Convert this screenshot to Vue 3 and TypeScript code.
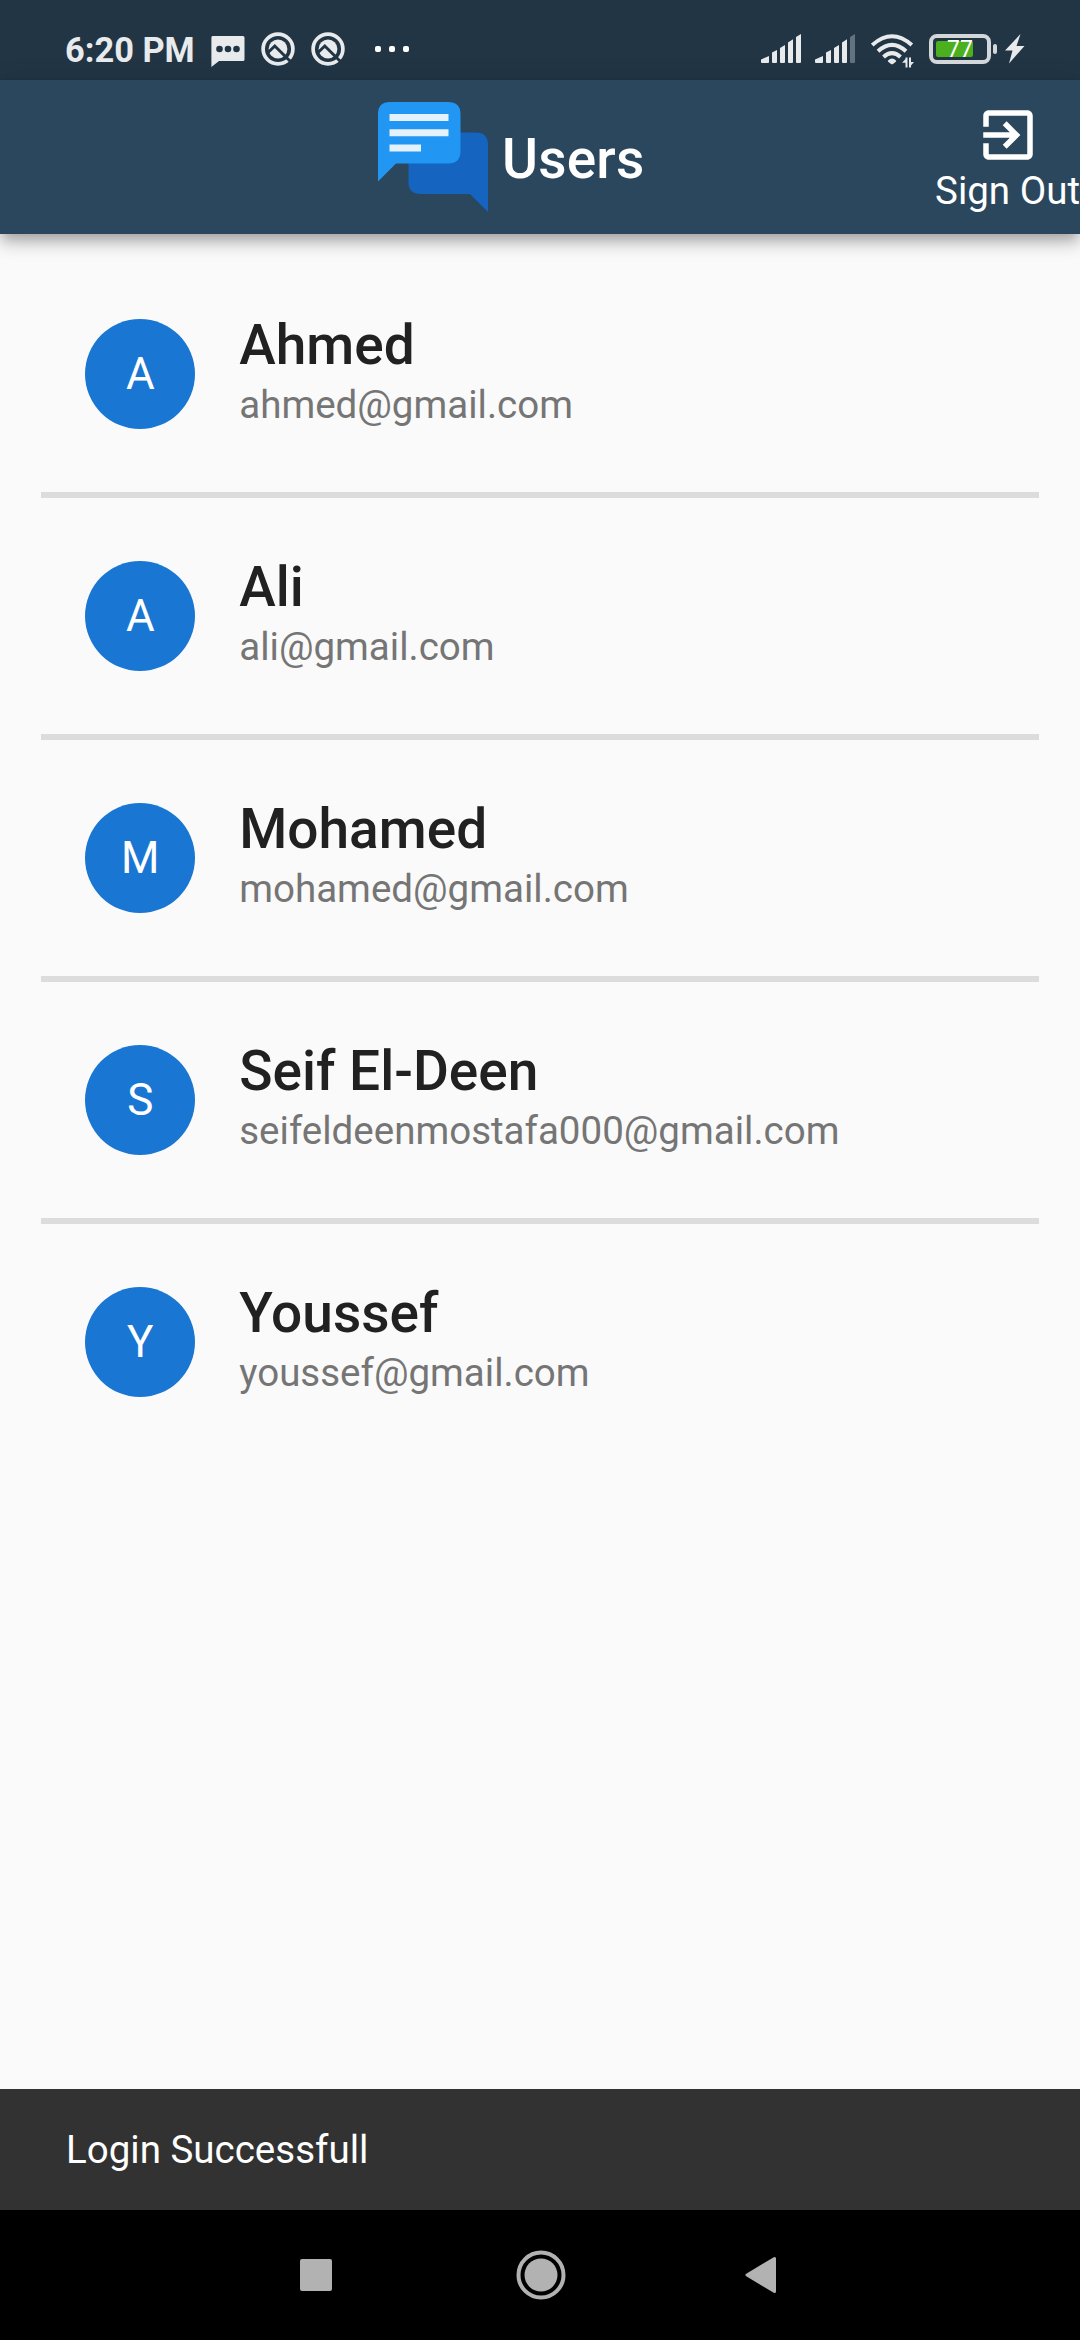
<script setup lang="ts">
interface User {
  name: string
  email: string
}

const users: User[] = [
  { name: 'Ahmed', email: 'ahmed@gmail.com' },
  { name: 'Ali', email: 'ali@gmail.com' },
  { name: 'Mohamed', email: 'mohamed@gmail.com' },
  { name: 'Seif El-Deen', email: 'seifeldeenmostafa000@gmail.com' },
  { name: 'Youssef', email: 'youssef@gmail.com' },
]

// Signal strength bars, from weakest to strongest
const bars: string[] = [
  'M0 25.5L8 22V28.2Q8 29 7 29H1Q0 29 0 28Z',
  'M11 18.5L16 16V28Q16 29 15 29H12Q11 29 11 28Z',
  'M19 14L24 11V28Q24 29 23 29H20Q19 29 19 28Z',
  'M27 8.5L32 5.3V28Q32 29 31 29H28Q27 29 27 28Z',
  'M35 3L40 0V28Q40 29 39 29H36Q35 29 35 28Z',
]
const signals: number[] = [5, 4]
</script>

<template>
  <div class="screen">
    <div class="status">
      <span class="time">6:20 PM</span>
      <svg class="chat" width="34" height="32" viewBox="0 0 34 32">
        <path fill="#e8eaec" d="M1.500 0H32Q33.500 0 33.500 1.500V23.500Q33.500 25 32 25H8L0.400 31V1.500Q0.400 0 1.500 0Z" />
        <g fill="#213545"><circle cx="8.500" cy="13" r="3.300" /><circle cx="17" cy="13" r="3.300" /><circle cx="25.500" cy="13" r="3.300" /></g>
      </svg>
      <svg v-for="n in 2" :key="n" class="q" width="34" height="34" viewBox="0 0 34 34">
        <circle cx="17" cy="17" r="14.900" fill="none" stroke="#e8eaec" stroke-width="3.700" />
        <circle cx="17" cy="17" r="9.400" fill="#e8eaec" />
        <path fill="none" stroke="#213545" stroke-width="3" d="M6.500 21L13.800 14L31 31" />
      </svg>
      <svg class="dots" width="34" height="6" viewBox="0 0 34 6" fill="#fff">
        <rect width="6" height="6" rx="2" /><rect x="14" width="6" height="6" rx="2" /><rect x="28" width="6" height="6" rx="2" />
      </svg>
      <svg v-for="level in signals" :key="level" class="signal" width="40" height="29" viewBox="0 0 40 29">
        <path v-for="(d, i) in bars" :key="i" :d="d" :fill="i < level ? '#e8eaec' : '#647280'" />
      </svg>
      <svg class="wifi" width="43" height="34" viewBox="0 0 43 34">
        <g fill="none" stroke="#e8eaec" stroke-width="4">
          <path d="M1.200 11Q21 -6.500 40.800 11" />
          <path d="M7 17.200Q21 4.500 35 17.200" />
          <path d="M12.500 23Q21 15.300 29.500 23" />
        </g>
        <path fill="#e8eaec" d="M17 26.500Q21 22.500 25 26.500Q25.500 27 24.800 27.700L22 30Q21 30.600 20 30L17.200 27.700Q16.500 27 17 26.500Z" />
        <path fill="#213545" d="M30 23.500H43V34H30Z" />
        <path fill="#e8eaec" d="M34.500 23.500H36.500V33.500H34.500V28.800H31L34.500 25ZM38 23.500H40V28H43L40 31.500V33.500H38Z" />
      </svg>
      <div class="battery"><div class="charge"></div><span class="pct">77</span></div>
      <div class="cap"></div>
      <svg class="bolt" width="20" height="30" viewBox="0 0 20 30"><path fill="#e8eaec" d="M15.500 0L0 16.500H7.500L4 29.500L19.500 12H11.500Z" /></svg>
    </div>

    <header class="appbar">
      <svg class="logo" width="110" height="110" viewBox="0 0 110 110">
        <path fill="#1565c0" d="M42 30.500H98Q110 30.500 110 43V110L92 92H43Q30.500 92 30.500 80V42Q30.500 30.500 42 30.500Z" />
        <path fill="#2196f3" d="M12 0H70Q82.500 0 82.500 12V49Q82.500 61.500 70 61.500H18L0 79.500V12Q0 0 12 0Z" />
        <path fill="#e3f2fd" d="M11.500 12H70.500V19H11.500ZM11.500 27.300H70.500V34.300H11.500ZM11.500 42.500H43V49.500H11.500Z" />
      </svg>
      <h1>Users</h1>
      <div class="signout">
        <svg width="66" height="66" viewBox="0 0 24 24" fill="#fff"><path d="M10.090 15.590L11.500 17l5-5-5-5-1.410 1.410L12.670 11H3v2h9.670l-2.580 2.590zM19 3H5c-1.110 0-2 .9-2 2v4h2V5h14v14H5v-4H3v4c0 1.100.89 2 2 2h14c1.100 0 2-.9 2-2V5c0-1.100-.9-2-2-2z" /></svg>
        <span>Sign Out</span>
      </div>
    </header>

    <main class="list">
      <div v-for="user in users" :key="user.name" class="row">
        <div class="avatar">{{ user.name[0] }}</div>
        <div class="info">
          <div class="name">{{ user.name }}</div>
          <div class="email">{{ user.email }}</div>
        </div>
      </div>
    </main>

    <div class="snackbar">Login Successfull</div>

    <nav class="nav">
      <svg width="32" height="32" viewBox="0 0 32 32"><rect width="32" height="32" rx="2" fill="#b2b2b2" /></svg>
      <svg class="home" width="50" height="50" viewBox="0 0 50 50"><circle cx="25" cy="25" r="22.500" fill="none" stroke="#b2b2b2" stroke-width="4" /><circle cx="25" cy="25" r="16.500" fill="#b2b2b2" /></svg>
      <svg width="32" height="38" viewBox="0 0 32 38"><path fill="#b2b2b2" stroke="#b2b2b2" stroke-width="3" stroke-linejoin="round" d="M2 19L29.500 2.500V35.500Z" /></svg>
    </nav>
  </div>
</template>

<style>
body {
  margin: 0;
  background: #fafafa;
}
</style>

<style scoped>
.screen {
  width: 1080px;
  height: 2340px;
  display: flex;
  flex-direction: column;
  overflow: hidden;
  background: #fafafa;
  font-family: Roboto, "Liberation Sans", sans-serif;
}
.status {
  height: 80px;
  flex: none;
  box-sizing: border-box;
  padding-left: 65px;
  display: flex;
  align-items: flex-start;
  background: #213545;
  color: #e8eaec;
}
.status svg {
  flex: none;
}
.time {
  width: 146px;
  flex: none;
  margin-top: 30px;
  font-size: 34.4px;
  line-height: 40px;
  font-weight: 700;
  white-space: nowrap;
}
.chat { margin-top: 36px; }
.q { margin: 32px 0 0 16px; }
.dots { margin: 46px 352px 0 30px; }
.signal { margin: 34px 14px 0 0; }
.wifi { margin: 34px 15px 0 2px; }
.battery {
  width: 62px;
  height: 30px;
  flex: none;
  margin-top: 34px;
  box-sizing: border-box;
  border: 4px solid #d3d7da;
  border-radius: 8px;
  padding: 3px;
  position: relative;
}
.charge {
  width: 37px;
  height: 16px;
  border-radius: 2px;
  background: #4caf1e;
}
.pct {
  position: absolute;
  left: 14px;
  top: 0;
  font-size: 23px;
  line-height: 24px;
  color: #fff;
}
.cap {
  width: 4px;
  height: 10px;
  flex: none;
  margin: 44px 8px 0 2px;
  border-radius: 2px;
  background: #d3d7da;
}
.bolt { margin-top: 34px; }
.appbar {
  height: 154px;
  flex: none;
  box-sizing: border-box;
  padding-left: 378px;
  display: flex;
  align-items: center;
  background: #2b475d;
  color: #fff;
  box-shadow: 0 5.5px 11px -2.75px rgba(0, 0, 0, 0.2), 0 11px 13.75px rgba(0, 0, 0, 0.14), 0 2.75px 27.5px rgba(0, 0, 0, 0.12);
}
h1 {
  margin: 3px 0 0 14px;
  font-size: 55px;
  line-height: 64px;
  font-weight: 500;
  letter-spacing: 0.2px;
}
.signout {
  margin-left: auto;
  display: flex;
  flex-direction: column;
  align-items: center;
  font-size: 38.5px;
  line-height: 45px;
  white-space: nowrap;
}
.list {
  flex: 1;
  padding: 44px 41.25px 0;
}
.row {
  height: 214px;
  box-sizing: border-box;
  padding: 41px 44px 0;
  display: flex;
}
.row + .row {
  height: 242px;
  border-top: 6px solid #dcdcdc;
  padding-top: 63px;
}
.avatar {
  width: 110px;
  height: 110px;
  border-radius: 50%;
  background: #1976d2;
  color: #fff;
  font-size: 44px;
  line-height: 110px;
  text-align: center;
}
.info { margin: -6px 0 0 44px; }
.name {
  font-size: 55px;
  line-height: 64px;
  font-weight: 500;
  color: #212121;
}
.email {
  margin-top: 5px;
  font-size: 38.5px;
  line-height: 45px;
  color: #757575;
}
.snackbar {
  height: 121px;
  flex: none;
  padding-left: 66px;
  background: #323232;
  color: #fff;
  font-size: 38.5px;
  line-height: 121px;
}
.nav {
  height: 130px;
  flex: none;
  display: flex;
  align-items: center;
  padding-left: 300px;
  background: #000;
}
.home { margin: 0 179px 0 184px; }
</style>
